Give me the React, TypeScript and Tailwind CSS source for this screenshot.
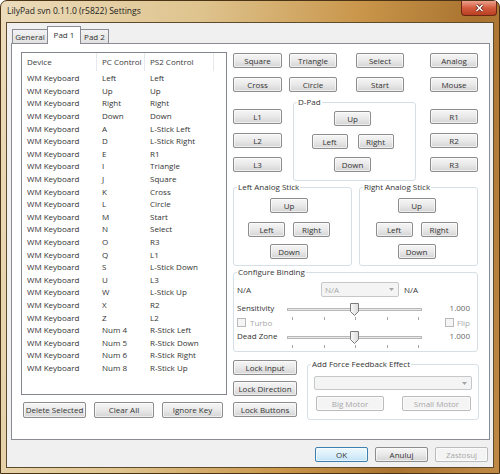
import React from "react";

const rows: [string, string][] = [
  ["Left", "Left"],
  ["Up", "Up"],
  ["Right", "Right"],
  ["Down", "Down"],
  ["A", "L-Stick Left"],
  ["D", "L-Stick Right"],
  ["E", "R1"],
  ["I", "Triangle"],
  ["J", "Square"],
  ["K", "Cross"],
  ["L", "Circle"],
  ["M", "Start"],
  ["N", "Select"],
  ["O", "R3"],
  ["Q", "L1"],
  ["S", "L-Stick Down"],
  ["U", "L3"],
  ["W", "L-Stick Up"],
  ["X", "R2"],
  ["Z", "L2"],
  ["Num 4", "R-Stick Left"],
  ["Num 5", "R-Stick Down"],
  ["Num 6", "R-Stick Right"],
  ["Num 8", "R-Stick Up"],
];

function Btn({
  children,
  className = "",
  disabled = false,
  primary = false,
}: {
  children: React.ReactNode;
  className?: string;
  disabled?: boolean;
  primary?: boolean;
}) {
  const tone = disabled
    ? "border-[#b9bcbe] bg-[#f4f4f4] text-[#a8a8a8]"
    : primary
      ? "border-[#3c7fb1] bg-linear-to-b from-[#eef8fd] via-[#dcf0fb] to-[#c3e3f5] text-[#333]"
      : "border-[#8d8d8d] bg-linear-to-b from-[#f6f6f6] via-[#e9e9e9] to-[#d4d4d4] text-[#333]";
  return (
    <div
      className={`flex h-[15px] shrink-0 items-center justify-center rounded-[2px] border leading-none shadow-[inset_0_0_0_1px_rgba(255,255,255,0.6)] ${tone} ${className}`}
    >
      {children}
    </div>
  );
}

function Group({
  label,
  className = "",
  children,
}: {
  label: string;
  className?: string;
  children: React.ReactNode;
}) {
  return (
    <fieldset className={`shrink-0 rounded-[3px] border border-[#d5dfe5] ${className}`}>
      <legend className="ml-[3px] px-[1px] leading-[10px] text-[#333]">{label}</legend>
      {children}
    </fieldset>
  );
}

function Arrow() {
  return (
    <svg width="5" height="3" viewBox="0 0 5 3">
      <path d="M0 0H5L2.5 3Z" fill="#a5a5a5" />
    </svg>
  );
}

function Slider() {
  return (
    <div className="relative h-[17px] w-[135px] shrink-0">
      <div className="absolute left-0 right-0 top-[5px] h-[3px] border border-[#b7b7b7] bg-[#e7eaea]" />
      <svg className="absolute left-[63px] top-0" width="9" height="13" viewBox="0 0 9 13">
        <defs>
          <linearGradient id="thumb" x1="0" y1="0" x2="1" y2="0">
            <stop offset="0" stopColor="#fbfbfb" />
            <stop offset="1" stopColor="#dadada" />
          </linearGradient>
        </defs>
        <path d="M0.5 0.5H8.5V8.5L4.5 12.5L0.5 8.5Z" fill="url(#thumb)" stroke="#7c7c7c" />
      </svg>
      <div className="absolute left-[5px] right-[3px] top-[14px] flex justify-between">
        <div className="h-[3px] w-px bg-[#a5a5a5]" />
        <div className="h-[3px] w-px bg-[#a5a5a5]" />
        <div className="h-[3px] w-px bg-[#a5a5a5]" />
        <div className="h-[3px] w-px bg-[#a5a5a5]" />
        <div className="h-[3px] w-px bg-[#a5a5a5]" />
      </div>
    </div>
  );
}

function Check() {
  return <div className="h-[9px] w-[9px] shrink-0 border border-[#b9b9b9] bg-[#f5f5f5]" />;
}

function Pad({ label, shift }: { label: string; shift: string }) {
  return (
    <Group label={label} className="h-[84px] w-[119px]">
      <div className={`flex flex-col items-center pt-[6px] ${shift}`}>
        <Btn className="w-[38px]">Up</Btn>
        <div className="mt-[9px] flex gap-[8px]">
          <Btn className="w-[37px]">Left</Btn>
          <Btn className="w-[37px]">Right</Btn>
        </div>
        <Btn className="mt-[7px] w-[38px]">Down</Btn>
      </div>
    </Group>
  );
}

export default function App() {
  return (
    <div className="h-[474px] w-[500px] overflow-hidden bg-white font-['Open_Sans',sans-serif] text-[8px] text-[#333]">
      <div className="flex h-full w-full flex-col rounded-t-[7px] border border-[#4a3415] bg-[linear-gradient(100deg,#ecdcbc_0%,#dec38d_35%,#c9964b_62%,#a9732f_82%,#bf8a45_100%)]">
        {/* ── Title bar ── */}
        <div className="flex h-[21px] shrink-0 items-start justify-between">
          <span className="pl-[6px] pt-[4px] text-[8.5px] leading-[12px] text-[#222]">
            LilyPad svn 0.11.0 (r5822) Settings
          </span>
          <div className="mr-[2px] flex h-[15px] w-[36px] items-center justify-center rounded-b-[4px] border border-t-0 border-[#6b2615] bg-linear-to-b from-[#eaa08c] via-[#d35a3c] to-[#b93f22]">
            <svg width="9" height="8" viewBox="0 0 9 8">
              <path d="M1.5 1L7.5 7M7.5 1L1.5 7" stroke="#5a1c10" strokeWidth="3" />
              <path d="M1.5 1L7.5 7M7.5 1L1.5 7" stroke="#ffffff" strokeWidth="1.6" />
            </svg>
          </div>
        </div>

        {/* ── Client area ── */}
        <div className="mx-[5px] mb-[5px] flex flex-1 flex-col border border-[#5e4a2c] bg-[#f0f0f0]">
          {/* tabs */}
          <div className="relative z-10 -mb-px ml-[5px] mt-[3px] flex h-[18px] items-end">
            <div className="mb-px flex h-[14px] w-[36px] items-center justify-center border border-b-0 border-[#898c95] bg-linear-to-b from-[#f3f3f3] to-[#e1e1e1] pt-px">
              General
            </div>
            <div className="-ml-px flex h-[18px] w-[34px] items-center justify-center border border-b-0 border-[#898c95] bg-white pb-[2px]">
              Pad 1
            </div>
            <div className="-ml-px mb-px flex h-[14px] w-[29px] items-center justify-center border border-b-0 border-[#898c95] bg-linear-to-b from-[#f3f3f3] to-[#e1e1e1] pt-px">
              Pad 2
            </div>
          </div>

          {/* tab panel */}
          <div className="ml-[4px] flex h-[397px] w-[479px] border border-[#898c95] bg-white">
            {/* left column */}
            <div className="ml-[9px] mt-[8px] flex flex-col">
              <div className="h-[343px] w-[206px] border border-[#828790] bg-white">
                <div className="flex h-[18px] items-center text-[#3a3a3a]">
                  <div className="flex h-full w-[75px] items-center border-r border-[#e5e8ec] pl-[5px]">Device</div>
                  <div className="flex h-full w-[48px] items-center border-r border-[#e5e8ec] pl-[5px]">PC Control</div>
                  <div className="flex h-full w-[69px] items-center border-r border-[#e5e8ec] pl-[5px]">PS2 Control</div>
                </div>
                <div className="pt-px">
                  {rows.map(([pc, ps2]) => (
                    <div key={pc} className="flex h-[12.6px] items-center">
                      <div className="w-[75px] pl-[5px]">WM Keyboard</div>
                      <div className="w-[48px] pl-[5px]">{pc}</div>
                      <div className="w-[69px] pl-[5px]">{ps2}</div>
                    </div>
                  ))}
                </div>
              </div>
              <div className="ml-[2px] mt-[7px] flex gap-[8px]">
                <Btn className="h-[16px] w-[63px]">Delete Selected</Btn>
                <Btn className="h-[16px] w-[60px]">Clear All</Btn>
                <Btn className="h-[16px] w-[61px]">Ignore Key</Btn>
              </div>
            </div>

            {/* right column */}
            <div className="ml-[6px] mt-[9px] flex w-[245px] flex-col">
              <div className="flex">
                <Btn className="w-[49px]">Square</Btn>
                <Btn className="ml-[7px] w-[48px]">Triangle</Btn>
                <Btn className="ml-[19px] w-[48px]">Select</Btn>
                <Btn className="ml-[26px] w-[48px]">Analog</Btn>
              </div>
              <div className="mt-[9px] flex">
                <Btn className="w-[49px]">Cross</Btn>
                <Btn className="ml-[7px] w-[48px]">Circle</Btn>
                <Btn className="ml-[19px] w-[48px]">Start</Btn>
                <Btn className="ml-[26px] w-[48px]">Mouse</Btn>
              </div>

              {/* shoulders + d-pad */}
              <div className="mt-[5px] flex items-start">
                <div className="mt-[12px] flex w-[49px] flex-col gap-[9px]">
                  <Btn className="w-[49px]">L1</Btn>
                  <Btn className="w-[49px]">L2</Btn>
                  <Btn className="w-[49px]">L3</Btn>
                </div>
                <Group label="D-Pad" className="ml-[11px] h-[84px] w-[123px]">
                  <div className="flex flex-col items-center pr-[4px] pt-[4px]">
                    <Btn className="w-[37px]">Up</Btn>
                    <div className="mt-[8px] flex gap-[10px]">
                      <Btn className="w-[36px]">Left</Btn>
                      <Btn className="w-[36px]">Right</Btn>
                    </div>
                    <Btn className="mt-[8px] w-[37px]">Down</Btn>
                  </div>
                </Group>
                <div className="ml-[14px] mt-[12px] flex w-[48px] flex-col gap-[9px]">
                  <Btn className="w-[48px]">R1</Btn>
                  <Btn className="w-[48px]">R2</Btn>
                  <Btn className="w-[48px]">R3</Btn>
                </div>
              </div>

              {/* analog sticks */}
              <div className="mt-[1px] flex gap-[7px]">
                <Pad label="Left Analog Stick" shift="pr-[7px]" />
                <Pad label="Right Analog Stick" shift="pr-[4px]" />
              </div>

              {/* configure binding */}
              <Group label="Configure Binding" className="mt-[1px] h-[85px] w-[245px]">
                <div className="flex flex-col px-[3px]">
                  <div className="mt-[5px] flex h-[15px] items-center">
                    <div className="w-[84px]">N/A</div>
                    <div className="flex h-[15px] w-[78px] items-center justify-between rounded-[2px] border border-[#c5c8ca] bg-[#f4f4f4] pl-[3px] pr-[4px] text-[#a8a8a8]">
                      N/A
                      <Arrow />
                    </div>
                    <div className="ml-[5px]">N/A</div>
                  </div>
                  <div className="mt-[6px] flex items-start">
                    <div className="w-[50px] leading-[10px]">Sensitivity</div>
                    <Slider />
                    <div className="flex-1 pr-[4px] text-right leading-[10px] text-[#666]">1.000</div>
                  </div>
                  <div className="-mt-[2px] flex h-[9px] items-center justify-between pr-[4px] text-[#a8a8a8]">
                    <div className="flex items-center">
                      <Check />
                      <span className="ml-[4px]">Turbo</span>
                    </div>
                    <div className="flex items-center">
                      <Check />
                      <span className="ml-[3px]">Flip</span>
                    </div>
                  </div>
                  <div className="mt-[4px] flex items-start">
                    <div className="w-[50px] leading-[10px]">Dead Zone</div>
                    <Slider />
                    <div className="flex-1 pr-[4px] text-right leading-[10px] text-[#666]">1.000</div>
                  </div>
                </div>
              </Group>

              {/* lock + force feedback */}
              <div className="mt-[7px] flex items-start">
                <div className="mt-px flex w-[64px] flex-col gap-[6px]">
                  <Btn className="w-[64px]">Lock Input</Btn>
                  <Btn className="w-[64px]">Lock Direction</Btn>
                  <Btn className="w-[64px]">Lock Buttons</Btn>
                </div>
                <Group label="Add Force Feedback Effect" className="ml-[10px] h-[61px] w-[171px]">
                  <div className="flex flex-col px-[6px] pt-[7px]">
                    <div className="flex h-[14px] w-[158px] items-center justify-end rounded-[2px] border border-[#c5c8ca] bg-[#f4f4f4] pr-[4px]">
                      <Arrow />
                    </div>
                    <div className="ml-[2px] mt-[6px] flex gap-[18px]">
                      <Btn disabled className="w-[68px]">Big Motor</Btn>
                      <Btn disabled className="w-[69px]">Small Motor</Btn>
                    </div>
                  </div>
                </Group>
              </div>
            </div>
          </div>

          {/* dialog buttons */}
          <div className="mt-[7px] flex justify-end gap-[7px] pr-[5px]">
            <Btn primary className="w-[53px]">OK</Btn>
            <Btn className="w-[53px]">Anuluj</Btn>
            <Btn disabled className="w-[53px]">Zastosuj</Btn>
          </div>
        </div>
      </div>
    </div>
  );
}
